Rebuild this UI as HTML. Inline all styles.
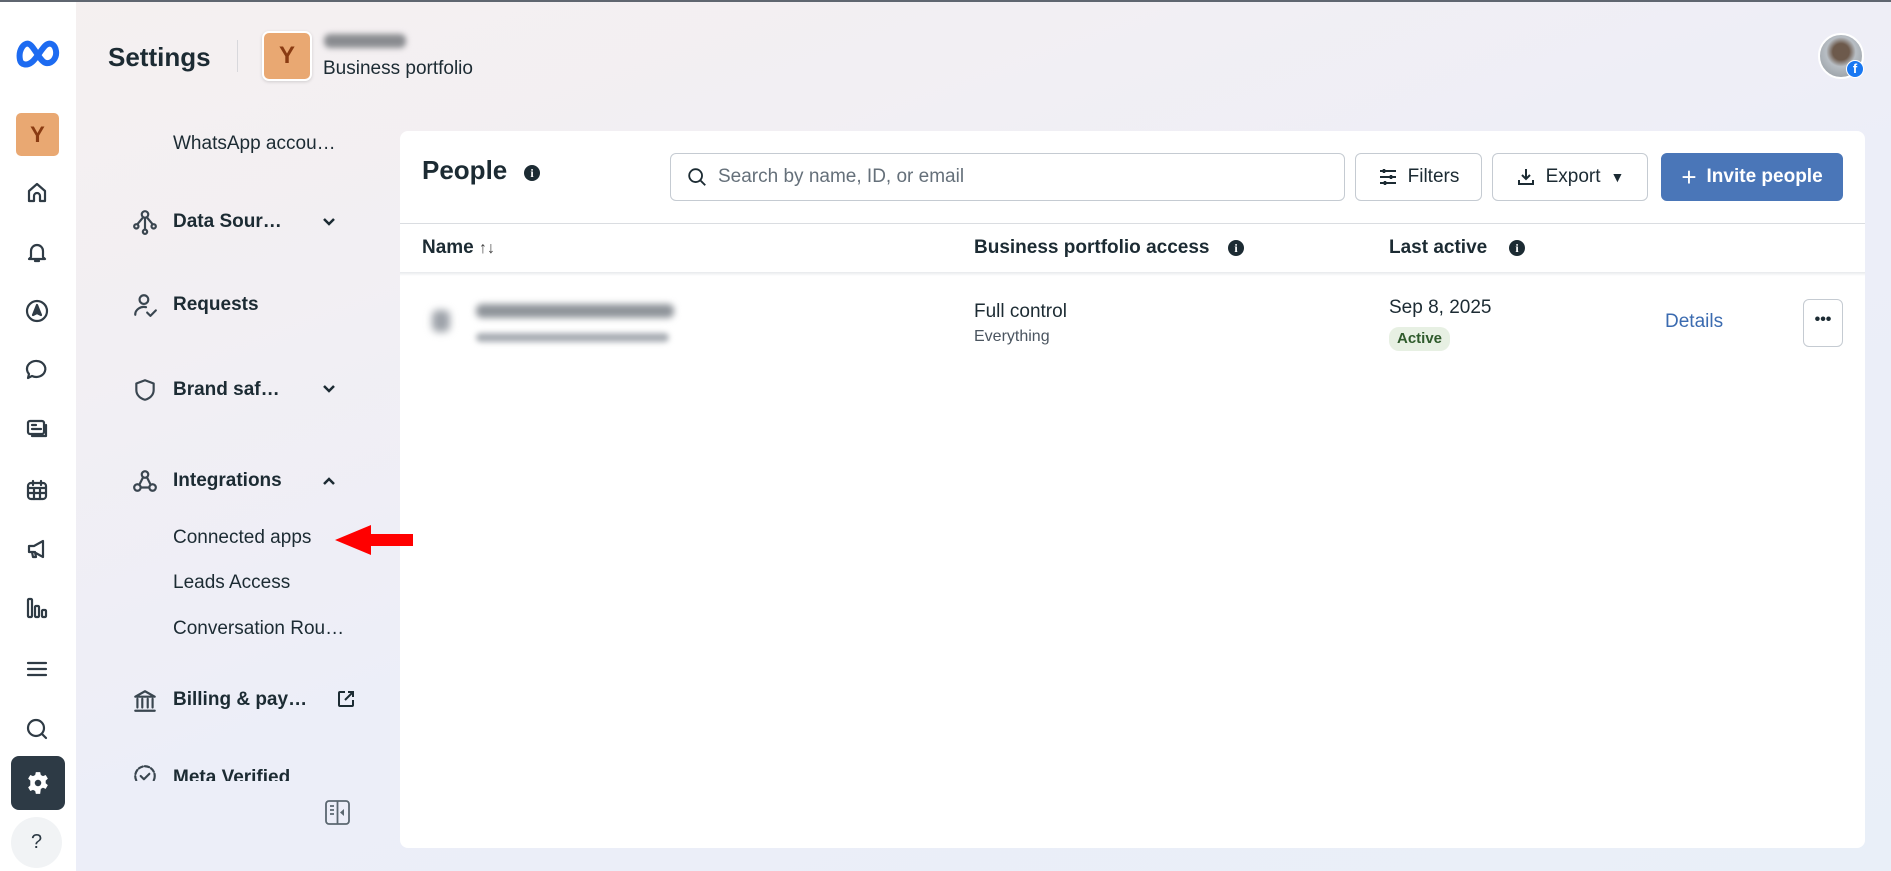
<!DOCTYPE html>
<html><head><meta charset="utf-8">
<style>
*{box-sizing:border-box;margin:0;padding:0}
html,body{width:1891px;height:871px;overflow:hidden}
body{font-family:"Liberation Sans",sans-serif;color:#1c2b33;position:relative;
background:linear-gradient(160deg,#f5f0f0 0%,#f2eff3 25%,#eceef8 55%,#e9eff8 100%);}
.topline{position:absolute;left:0;top:0;width:1891px;height:2px;background:#5f6670}
.rail{position:absolute;left:0;top:2px;width:76px;height:869px;background:#fff}
.ri{position:absolute;left:25px;width:24px;height:24px}
.ri svg{width:24px;height:24px;fill:none;stroke:#2f3b45;stroke-width:2.2;stroke-linecap:round;stroke-linejoin:round}
.t{position:absolute;white-space:nowrap}
.side{font-size:19px;color:#1c2b33}
.bold{font-weight:bold}
.sic{position:absolute;width:26px;height:26px}
.sic svg{width:26px;height:26px;fill:none;stroke:#3a4650;stroke-width:2;stroke-linecap:round;stroke-linejoin:round}
.panel{position:absolute;left:400px;top:131px;width:1465px;height:717px;background:#fff;border-radius:8px}
.btn{position:absolute;top:153px;height:48px;border:1px solid #c5cbd2;border-radius:6px;background:#fff;font-size:19px;display:flex;align-items:center;justify-content:center;gap:10px}
.info{display:inline-block;width:16px;height:16px;border-radius:50%;background:#1c2b33;color:#fff;font-size:12px;font-weight:bold;text-align:center;line-height:16px;font-family:"Liberation Serif",serif}
</style></head><body>
<div class="topline"></div>
<div class="rail">
  <svg style="position:absolute;left:15px;top:36px" width="47" height="30" viewBox="0 0 47 30"><path d="M5 22 C3 12,9 4,14 6 C19 8,25 24,31 25 C37 26,42 20,41 13 C40 6,35 4,31 7 C27 10,22 20,17 24 C12 28,6 27,5 22Z" fill="none" stroke="#1d6bf1" stroke-width="6"/></svg>
  <div style="position:absolute;left:16px;top:111px;width:43px;height:43px;border-radius:5px;background:#e9a872;color:#8a3b12;font-weight:bold;font-size:22px;text-align:center;line-height:43px">Y</div>
  <div class="ri" style="top:179px"><svg viewBox="0 0 24 24"><path d="M4 20V10l8-7 8 7v10h-5v-5a3 3 0 0 0-6 0v5z"/></svg></div>
  <div class="ri" style="top:238px"><svg viewBox="0 0 24 24"><path d="M6 17V11a6 6 0 0 1 12 0v6l2 2H4z M10 21h4"/></svg></div>
  <div class="ri" style="top:297px"><svg viewBox="0 0 24 24"><circle cx="12" cy="12" r="10"/><path d="M12 6l4 10-4-2-4 2z" fill="#2f3b45"/></svg></div>
  <div class="ri" style="top:356px"><svg viewBox="0 0 24 24"><path d="M12 3a9 8 0 1 1-5 15l-4 2 1-4A9 8 0 0 1 12 3z"/></svg></div>
  <div class="ri" style="top:415px"><svg viewBox="0 0 24 24"><rect x="3" y="4" width="16" height="13" rx="2"/><path d="M7 8h4M7 12h9M21 8v11H7"/></svg></div>
  <div class="ri" style="top:476px"><svg viewBox="0 0 24 24"><rect x="3" y="5" width="18" height="16" rx="3"/><path d="M3 10h18M8 3v4M16 3v4M9 10v11M15 10v11M3 15h18"/></svg></div>
  <div class="ri" style="top:535px"><svg viewBox="0 0 24 24"><path d="M4 9h5l9-5v16l-9-5H4z M7 15l1 5h3l-1-5"/></svg></div>
  <div class="ri" style="top:594px"><svg viewBox="0 0 24 24"><rect x="3" y="3" width="4" height="18" rx="1"/><rect x="10" y="10" width="4" height="11" rx="1"/><rect x="17" y="14" width="4" height="7" rx="1"/></svg></div>
  <div class="ri" style="top:655px"><svg viewBox="0 0 24 24"><path d="M3 6h18M3 12h18M3 18h18"/></svg></div>
  <div class="ri" style="top:715px"><svg viewBox="0 0 24 24"><circle cx="11" cy="11" r="8"/><path d="M17 17l4 4"/></svg></div>
  <div style="position:absolute;left:11px;top:754px;width:54px;height:54px;border-radius:8px;background:#2d3a45"><svg style="position:absolute;left:14px;top:14px" width="26" height="26" viewBox="0 0 24 24"><path fill="#fff" d="M10 2h4l.6 2.6 2 1 2.5-1 2 3.4-2 1.8v2.4l2 1.8-2 3.4-2.5-1-2 1L14 22h-4l-.6-2.6-2-1-2.5 1-2-3.4 2-1.8V9.8l-2-1.8 2-3.4 2.5 1 2-1z"/><circle cx="12" cy="12" r="3" fill="#2d3a45"/></svg></div>
  <div style="position:absolute;left:11px;top:815px;width:51px;height:51px;border-radius:50%;background:#f1f3f5;text-align:center;line-height:51px;font-size:20px;color:#2d3a45">?</div>
</div>

<div class="t bold" style="left:108px;top:42px;font-size:26px">Settings</div>
<div style="position:absolute;left:237px;top:40px;width:1px;height:32px;background:#d8d8dc"></div>
<div style="position:absolute;left:262px;top:31px;width:50px;height:50px;border-radius:7px;background:#e9a872;border:2px solid #fff;box-shadow:0 1px 3px rgba(0,0,0,.15);color:#8a3b12;font-weight:bold;font-size:24px;text-align:center;line-height:46px">Y</div>
<div style="position:absolute;left:324px;top:34px;width:82px;height:14px;background:#8a8c90;border-radius:6px;filter:blur(3px)"></div>
<div class="t" style="left:323px;top:58px;font-size:19px">Business portfolio</div>
<div style="position:absolute;left:1818px;top:33px;width:46px;height:46px;border-radius:50%;border:2px solid #fff;background:radial-gradient(circle at 50% 40%,#6d5a4c 0 25%,#b8bec4 45%,#8d949a 100%)"></div>
<div style="position:absolute;left:1846px;top:60px;width:18px;height:18px;border-radius:50%;background:#1877f2;border:1.5px solid #fff;color:#fff;font-weight:bold;font-size:13px;text-align:center;line-height:16px">f</div>

<div class="t side" style="left:173px;top:133px">WhatsApp accou…</div>
<div class="sic" style="left:132px;top:209px"><svg viewBox="0 0 24 24"><circle cx="12" cy="5" r="3"/><circle cx="4" cy="16" r="2"/><circle cx="12" cy="21" r="2"/><circle cx="20" cy="16" r="2"/><path d="M10 8l-5 6M12 8v11M14 8l5 6"/></svg></div>
<div class="t side bold" style="left:173px;top:211px">Data Sour…</div>
<svg style="position:absolute;left:321px;top:215px" width="16" height="14" viewBox="0 0 16 14"><path d="M3 4l5 5 5-5" fill="none" stroke="#1c2b33" stroke-width="2.5"/></svg>
<div class="sic" style="left:132px;top:292px"><svg viewBox="0 0 24 24"><circle cx="11" cy="7" r="4"/><path d="M3 21a8 7 0 0 1 10-7M14 19l3 3 5-5"/></svg></div>
<div class="t side bold" style="left:173px;top:294px">Requests</div>
<div class="sic" style="left:132px;top:377px"><svg viewBox="0 0 24 24"><path d="M12 3l8 3v6c0 5-4 8-8 9-4-1-8-4-8-9V6z"/></svg></div>
<div class="t side bold" style="left:173px;top:379px">Brand saf…</div>
<svg style="position:absolute;left:321px;top:382px" width="16" height="14" viewBox="0 0 16 14"><path d="M3 4l5 5 5-5" fill="none" stroke="#1c2b33" stroke-width="2.5"/></svg>
<div class="sic" style="left:132px;top:468px"><svg viewBox="0 0 24 24"><circle cx="12" cy="6" r="3"/><circle cx="5" cy="18" r="3"/><circle cx="19" cy="18" r="3"/><path d="M10 9l-3 6M14 9l3 6M8 18h8"/></svg></div>
<div class="t side bold" style="left:173px;top:470px">Integrations</div>
<svg style="position:absolute;left:321px;top:474px" width="16" height="14" viewBox="0 0 16 14"><path d="M3 10l5-5 5 5" fill="none" stroke="#1c2b33" stroke-width="2.5"/></svg>
<div class="t side" style="left:173px;top:527px">Connected apps</div>
<div class="t side" style="left:173px;top:572px">Leads Access</div>
<div class="t side" style="left:173px;top:618px">Conversation Rou…</div>
<div class="sic" style="left:132px;top:688px"><svg viewBox="0 0 24 24"><path d="M3 8l9-5 9 5zM5 10v8M9.5 10v8M14.5 10v8M19 10v8M3 21h18"/></svg></div>
<div class="t side bold" style="left:173px;top:689px">Billing &amp; pay…</div>
<svg style="position:absolute;left:336px;top:689px" width="20" height="20" viewBox="0 0 20 20"><path d="M9 3H4a1 1 0 0 0-1 1v12a1 1 0 0 0 1 1h12a1 1 0 0 0 1-1v-5M12 3h5v5M17 3l-8 8" fill="none" stroke="#1c2b33" stroke-width="2"/></svg>
<div style="position:absolute;left:120px;top:755px;width:240px;height:26px;overflow:hidden">
  <div class="sic" style="left:12px;top:8px"><svg viewBox="0 0 24 24"><circle cx="12" cy="12" r="9" stroke-dasharray="4 2"/><path d="M8 12l3 3 5-5"/></svg></div>
  <div class="t side bold" style="left:53px;top:12px">Meta Verified</div>
</div>
<svg style="position:absolute;left:325px;top:800px" width="25" height="25" viewBox="0 0 25 25"><rect x="1" y="1" width="23" height="23" rx="3" fill="none" stroke="#5b6770" stroke-width="1.8"/><path d="M12.5 1v23M5 6h4M5 10h4M5 14h4" stroke="#5b6770" stroke-width="1.8"/><path d="M19 9v7l-4-3.5z" fill="#5b6770"/></svg>

<div class="panel"></div>
<svg style="position:absolute;left:335px;top:525px" width="78" height="30" viewBox="0 0 78 30"><path d="M0 15L36 0V9H78V21H36V30Z" fill="#f00"/></svg>
<div class="t bold" style="left:422px;top:155px;font-size:26px">People</div>
<span class="info" style="position:absolute;left:524px;top:165px">i</span>
<div style="position:absolute;left:670px;top:153px;width:675px;height:48px;border:1px solid #c5cbd2;border-radius:6px;background:#fff"></div>
<svg style="position:absolute;left:686px;top:166px" width="22" height="22" viewBox="0 0 24 24"><circle cx="10.5" cy="10.5" r="7" fill="none" stroke="#1c2b33" stroke-width="2"/><path d="M16 16l5 5" stroke="#1c2b33" stroke-width="2"/></svg>
<div class="t" style="left:718px;top:166px;font-size:19px;color:#65707a">Search by name, ID, or email</div>
<div class="btn" style="left:1355px;width:127px"><svg width="20" height="20" viewBox="0 0 20 20"><path d="M2 4h16M2 10h16M2 16h16" stroke="#1c2b33" stroke-width="2"/><path d="M6 2v4M13 8v4M7 14v4" stroke="#1c2b33" stroke-width="2.5"/></svg>Filters</div>
<div class="btn" style="left:1492px;width:156px"><svg width="20" height="20" viewBox="0 0 20 20"><path d="M10 2v10M6 8l4 4 4-4M3 13v4h14v-4" fill="none" stroke="#1c2b33" stroke-width="2"/></svg>Export<span style="font-size:14px">▼</span></div>
<div class="btn" style="left:1661px;width:182px;background:#4a76b8;border-color:#4a76b8;color:#fff;font-weight:bold"><span style="font-size:26px;font-weight:normal;line-height:20px">+</span>Invite people</div>
<div style="position:absolute;left:400px;top:223px;width:1465px;height:1px;background:#dadde1"></div>
<div class="t bold" style="left:422px;top:237px;font-size:19px">Name <span style="font-weight:normal;font-size:16px;color:#444">↑↓</span></div>
<div class="t bold" style="left:974px;top:237px;font-size:19px">Business portfolio access</div>
<span class="info" style="position:absolute;left:1228px;top:240px">i</span>
<div class="t bold" style="left:1389px;top:237px;font-size:19px">Last active</div>
<span class="info" style="position:absolute;left:1509px;top:240px">i</span>
<div style="position:absolute;left:400px;top:272px;width:1465px;height:4px;background:linear-gradient(#e7e9ec,rgba(255,255,255,0))"></div>
<div style="position:absolute;left:432px;top:310px;width:18px;height:22px;border-radius:6px;background:#9ea3aa;filter:blur(4px)"></div>
<div style="position:absolute;left:476px;top:304px;width:198px;height:14px;border-radius:6px;background:#8f949a;filter:blur(3.5px)"></div>
<div style="position:absolute;left:476px;top:333px;width:193px;height:9px;border-radius:5px;background:#a7acb2;filter:blur(3px)"></div>
<div class="t" style="left:974px;top:301px;font-size:19px">Full control</div>
<div class="t" style="left:974px;top:328px;font-size:16px;color:#4b5560">Everything</div>
<div class="t" style="left:1389px;top:297px;font-size:19px">Sep 8, 2025</div>
<div class="t bold" style="left:1389px;top:327px;height:24px;padding:0 8px;border-radius:10px;background:#e7f0e3;color:#2f5b2c;font-size:15px;line-height:24px">Active</div>
<div class="t" style="left:1665px;top:311px;font-size:19px;color:#3b6bb0">Details</div>
<div style="position:absolute;left:1803px;top:299px;width:40px;height:48px;border:1px solid #c5cbd2;border-radius:6px;text-align:center;line-height:40px;font-weight:bold;font-size:16px">•••</div>
</body></html>
